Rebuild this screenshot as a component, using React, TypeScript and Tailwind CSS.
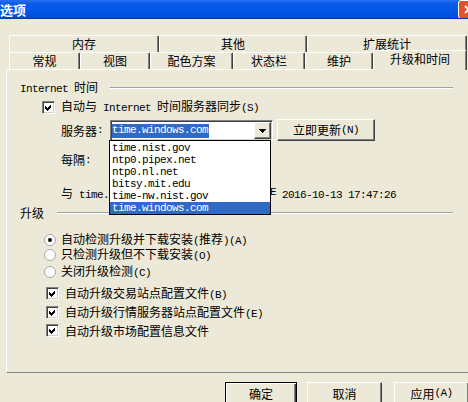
import React from 'react';

const M: React.FC<{ children: React.ReactNode }> = ({ children }) => (
  <span className="font-['Liberation_Mono',monospace] text-[11px] tracking-[-0.6px]">{children}</span>
);

const CheckMark = () => (
  <svg width="7" height="7" viewBox="0 0 7 7" shapeRendering="crispEdges">
    <polygon points="0,2 2,4 6,0 6,3 2,7 0,5" fill="#000" />
  </svg>
);

const Check = () => (
  <span className="flex h-[13px] w-[13px] flex-none items-center justify-center border border-t-[#808080] border-l-[#808080] border-r-white border-b-white bg-white shadow-[inset_1px_1px_0_#404040,inset_-1px_-1px_0_#D4D0C8]">
    <CheckMark />
  </span>
);

const Radio = ({ on }: { on?: boolean }) => (
  <span className="flex h-[12px] w-[12px] flex-none items-center justify-center rounded-full border border-[#A8A8A8] bg-white">
    {on && <span className="h-[4px] w-[4px] rounded-full bg-black" />}
  </span>
);

const Tab = ({ label, className }: { label: string; className: string }) => (
  <div
    className={`flex h-[17px] flex-none items-center justify-center rounded-t-[2px] border-t border-l border-r border-t-white border-l-white border-r-[#404040] shadow-[inset_-1px_0_0_#808080] ${className}`}
  >
    {label}
  </div>
);

const Group = ({ children, gap }: { children: React.ReactNode; gap: string }) => (
  <div className="flex h-[16px] w-[446px] items-center pl-[13px]">
    <span className="whitespace-nowrap">{children}</span>
    <span className={`h-[2px] flex-1 border-t border-b border-t-[#A0A0A0] border-b-white ${gap}`} />
  </div>
);

const Button = ({ children, className }: { children: React.ReactNode; className: string }) => (
  <div
    className={`flex flex-none items-center justify-center border border-t-white border-l-white border-r-[#404040] border-b-[#404040] shadow-[inset_-1px_-1px_0_#808080] ${className}`}
  >
    {children}
  </div>
);

const servers = ['time.nist.gov', 'ntp0.pipex.net', 'ntp0.nl.net', 'bitsy.mit.edu', 'time-nw.nist.gov', 'time.windows.com'];

export default function App() {
  return (
    <div className="relative h-[402px] w-[468px] overflow-hidden bg-[#ECE9D8] font-['Noto_Sans_CJK_SC',sans-serif] text-[12px] leading-none text-black">
      {/* title bar */}
      <div className="flex h-[19px] items-center overflow-hidden border-b border-[#0039A8] bg-[linear-gradient(180deg,#2470F0_0%,#0A5CEB_20%,#0055E5_65%,#004BD6_100%)]">
        <span className="text-[13px] font-bold text-white">选项</span>
        <div className="-mr-[11px] ml-auto flex h-[19px] w-[21px] items-center justify-center rounded-[3px] border border-white bg-[#E0522C]">
          <svg width="9" height="9" viewBox="0 0 9 9">
            <path d="M1 1 L8 8 M8 1 L1 8" stroke="#fff" strokeWidth="2" />
          </svg>
        </div>
      </div>

      {/* tabs */}
      <div className="mt-[16px] flex pl-[9px]">
        <Tab label="内存" className="w-[150px]" />
        <Tab label="其他" className="w-[148px]" />
        <Tab label="扩展统计" className="w-[160px]" />
      </div>
      <div className="flex h-[17px] items-start pl-[9px]">
        <Tab label="常规" className="w-[71px]" />
        <Tab label="视图" className="w-[70px]" />
        <Tab label="配色方案" className="w-[83px]" />
        <Tab label="状态栏" className="w-[72px]" />
        <Tab label="维护" className="w-[68px]" />
        <div className="relative z-10 -mt-[2px] flex h-[20px] w-[94px] flex-none items-center justify-center rounded-t-[2px] border-t border-l border-r border-t-white border-l-white border-r-[#404040] bg-[#ECE9D8] pb-[4px] shadow-[inset_-1px_0_0_#808080]">
          升级和时间
        </div>
      </div>

      {/* panel */}
      <div className="ml-[6px] h-[304px] w-[480px] border-t border-l border-b border-t-white border-l-white border-b-[#808080]">
        <div className="mt-[10px]">
          <Group gap="ml-[12px]">
            <M>Internet </M>时间
          </Group>
        </div>
        <div className="mt-[3px] flex h-[16px] items-center pl-[35px]">
          <Check />
          <span className="ml-[6px]">
            自动与<M> Internet </M>时间服务器同步<M>(S)</M>
          </span>
        </div>
        <div className="mt-[5px] flex h-[21px] items-start pl-[54px]">
          <span className="flex h-[21px] w-[49px] flex-none items-center">
            服务器<M>:</M>
          </span>
          <div className="flex h-[21px] w-[163px] flex-none items-center border border-t-[#808080] border-l-[#808080] border-r-white border-b-white bg-white pl-[1px] pr-[1px] shadow-[inset_1px_1px_0_#404040,inset_-1px_-1px_0_#D4D0C8]">
            <span className="flex h-[14px] items-center bg-[#316AC5] pr-[1px] text-white">
              <M>time.windows.com</M>
            </span>
            <Button className="ml-auto h-[17px] w-[17px] bg-[#ECE9D8]">
              <svg width="7" height="4" viewBox="0 0 7 4" shapeRendering="crispEdges">
                <polygon points="0,0 7,0 3.5,4" fill="#000" />
              </svg>
            </Button>
          </div>
          <Button className="-mt-[1px] ml-[4px] h-[22px] w-[98px]">
            立即更新<M>(N)</M>
          </Button>
        </div>
        <div className="mt-[11px] flex h-[16px] items-center pl-[54px]">
          每隔<M>:</M>
        </div>
        <div className="mt-[18px] flex h-[16px] items-center pl-[54px]">
          <span className="flex w-[215px] flex-none justify-between">
            <span>
              与<M> time.windows.com </M>同步成功
            </span>
            <M>DATE</M>
          </span>
          <span className="ml-[6px]">
            <M>2016-10-13 17:47:26</M>
          </span>
        </div>
        <div className="mt-[3px]">
          <Group gap="ml-[13px]">升级</Group>
        </div>
        <div className="mt-[11px] flex h-[15px] items-center pl-[37px]">
          <Radio on />
          <span className="ml-[5px]">
            自动检测升级并下载安装<M>(</M>推荐<M>)(A)</M>
          </span>
        </div>
        <div className="flex h-[15px] items-center pl-[37px]">
          <Radio />
          <span className="ml-[5px]">
            只检测升级但不下载安装<M>(O)</M>
          </span>
        </div>
        <div className="mt-[2px] flex h-[15px] items-center pl-[37px]">
          <Radio />
          <span className="ml-[5px]">
            关闭升级检测<M>(C)</M>
          </span>
        </div>
        <div className="mt-[7px] flex h-[15px] items-center pl-[39px]">
          <Check />
          <span className="ml-[6px]">
            自动升级交易站点配置文件<M>(B)</M>
          </span>
        </div>
        <div className="mt-[4px] flex h-[15px] items-center pl-[39px]">
          <Check />
          <span className="ml-[6px]">
            自动升级行情服务器站点配置文件<M>(E)</M>
          </span>
        </div>
        <div className="mt-[3px] flex h-[15px] items-center pl-[39px]">
          <Check />
          <span className="ml-[6px]">自动升级市场配置信息文件</span>
        </div>
      </div>

      {/* dialog buttons */}
      <div className="mt-[9px] flex pl-[225px]">
        <div className="flex h-[23px] w-[72px] flex-none items-center justify-center border border-black shadow-[inset_1px_1px_0_#fff,inset_-1px_-1px_0_#404040,inset_-2px_-2px_0_#808080]">
          确定
        </div>
        <Button className="ml-[10px] h-[23px] w-[75px]">取消</Button>
        <Button className="ml-[12px] h-[23px] w-[75px]">
          应用<M>(A)</M>
        </Button>
      </div>

      {/* open dropdown list */}
      <div className="absolute left-[109px] top-[140px] h-[75px] w-[162px] border border-black bg-white pt-[1px]">
        {servers.map((s, i) => (
          <div
            key={s}
            className={`flex h-[12px] items-center pl-[2px] ${i === servers.length - 1 ? 'bg-[#316AC5] text-white' : ''}`}
          >
            <M>{s}</M>
          </div>
        ))}
      </div>
    </div>
  );
}
